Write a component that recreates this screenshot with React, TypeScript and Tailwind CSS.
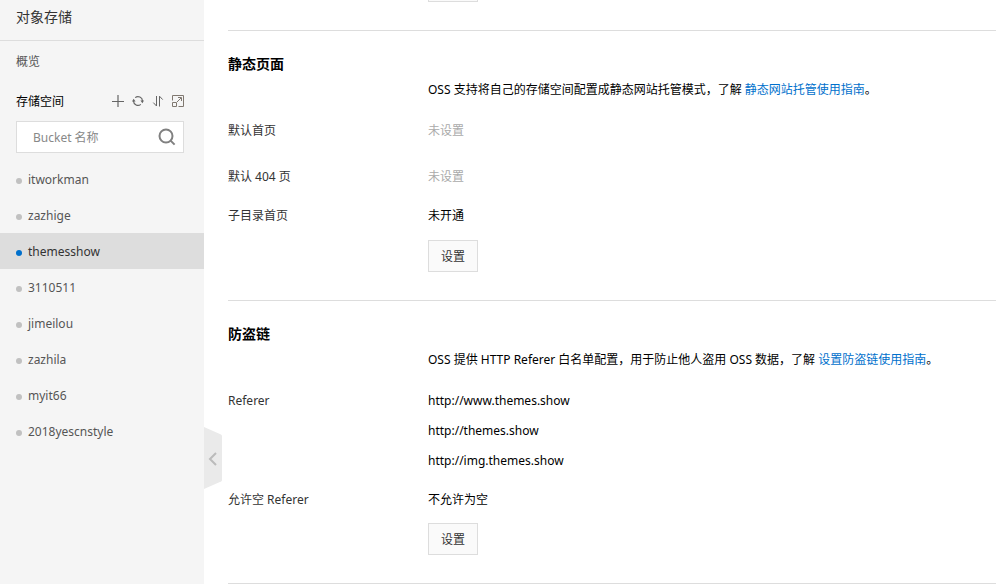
import React, { useState } from 'react';

const buckets = [
  'itworkman',
  'zazhige',
  'themesshow',
  '3110511',
  'jimeilou',
  'zazhila',
  'myit66',
  '2018yescnstyle',
];

const referers = ['http://www.themes.show', 'http://themes.show', 'http://img.themes.show'];

const PlusIcon = () => (
  <svg width="12" height="12" viewBox="0 0 12 12" fill="none" stroke="currentColor">
    <path d="M6 0v12M0 6.5h12" strokeWidth="1.2" />
  </svg>
);

const RefreshIcon = () => (
  <svg width="12" height="12" viewBox="0 0 12 12" fill="none" stroke="currentColor" strokeWidth="1.2">
    <path d="M3.2 2.6A4.5 4.5 0 0 1 10.5 6M8.8 9.4A4.5 4.5 0 0 1 1.5 6" />
    <path d="M8.4 5.6H12L10.4 8.2zM0 6.4h3.6L1.6 3.8z" fill="currentColor" stroke="none" />
  </svg>
);

const SortIcon = () => (
  <svg width="12" height="12" viewBox="0 0 12 12" fill="none" stroke="currentColor">
    <path d="M4.5 1v10L1.3 7.6M7.5 11.5V1.2l3.2 3.4" />
  </svg>
);

const ExpandIcon = () => (
  <svg width="12" height="12" viewBox="0 0 12 12" fill="none" stroke="#807870">
    <path d="M0.5 5.5v-5h11v11h-5M0.5 7.5h4v4h-4zM5 7l4-4M6 2.5h3.5V6" />
  </svg>
);

const SearchIcon = () => (
  <svg width="18" height="18" viewBox="0 0 18 18" fill="none" stroke="currentColor" strokeWidth="2">
    <circle cx="8" cy="8" r="6.5" />
    <path d="M12.6 12.6l4 4" />
  </svg>
);

const Section: React.FC<{ title: string; children: React.ReactNode }> = ({ title, children }) => (
  <section className="border-t border-[#ddd] pt-[23px] pb-7">
    <h2 className="text-sm leading-5 font-bold text-black">{title}</h2>
    {children}
  </section>
);

const Row: React.FC<{ label?: string; className?: string; children: React.ReactNode }> = ({
  label,
  className = '',
  children,
}) => (
  <div className={`flex leading-[30px] ${className}`}>
    <div className="w-[200px] shrink-0 text-[#333]">{label}</div>
    <div className="min-w-0 flex-1 text-black">{children}</div>
  </div>
);

const SettingButton = () => (
  <button
    type="button"
    className="block h-8 border border-[#ddd] bg-[#fafafa] px-3 pt-0.5 text-xs text-[#333] hover:bg-[#f0f0f0]"
  >
    设置
  </button>
);

const App: React.FC = () => {
  const [current, setCurrent] = useState('themesshow');
  const [keyword, setKeyword] = useState('');

  return (
    <div className="flex min-h-screen bg-white font-['Noto_Sans','Noto_Sans_CJK_SC',sans-serif] text-xs">
      {/* Sidebar */}
      <aside className="relative w-[204px] shrink-0 bg-[#f5f5f5] text-[#555]">
        <h1 className="h-[41px] border-b border-[#ddd] px-4 text-sm leading-[34px] text-[#333]">对象存储</h1>
        <a href="#overview" className="block h-10 px-4 leading-[42px]">
          概览
        </a>
        <div className="flex h-10 items-center justify-between pr-5 pl-4">
          <span className="pt-0.5 text-black">存储空间</span>
          <div className="flex gap-2 text-[#666]">
            <button type="button" aria-label="新建">
              <PlusIcon />
            </button>
            <button type="button" aria-label="刷新">
              <RefreshIcon />
            </button>
            <button type="button" aria-label="排序">
              <SortIcon />
            </button>
            <button type="button" aria-label="展开">
              <ExpandIcon />
            </button>
          </div>
        </div>
        <div className="mr-5 ml-4 flex h-8 items-center border border-[#ddd] bg-white pr-[7px]">
          <input
            type="text"
            aria-label="Bucket 名称"
            placeholder="Bucket 名称"
            value={keyword}
            onChange={(e) => setKeyword(e.target.value)}
            className="h-full min-w-0 flex-1 pl-4 outline-none placeholder:text-[#888]"
          />
          <button type="button" aria-label="搜索" className="text-[#808080]">
            <SearchIcon />
          </button>
        </div>

        {/* Bucket list */}
        <ul className="mt-2">
          {buckets.map((name) => (
            <li key={name}>
              <button
                type="button"
                onClick={() => setCurrent(name)}
                className={`flex h-9 w-full items-center gap-1.5 px-4 pt-0.5 ${
                  name === current ? 'bg-[#ddd] text-[#333]' : ''
                }`}
              >
                <span
                  className={`mt-0.5 size-1.5 rounded-full ${name === current ? 'bg-[#0070cc]' : 'bg-[#c1c1c1]'}`}
                />
                {name}
              </button>
            </li>
          ))}
        </ul>

        {/* Collapse handle */}
        <button type="button" aria-label="收起" className="absolute top-[427px] left-full">
          <svg width="18" height="62" viewBox="0 0 18 62" fill="none">
            <path d="M0 0l17 7.5q1 .5 1 1.5v44q0 1-1 1.5L0 62z" fill="#eaeaea" />
            <path d="M12 26l-6 6 6 6" stroke="#bbb" strokeWidth="2" />
          </svg>
        </button>
      </aside>

      {/* Settings */}
      <main className="min-w-0 flex-1 pl-6">
        {/* Lower edge of the previous section's button */}
        <div className="pb-7 pl-[200px]">
          <div className="h-0.5 w-[50px] border border-t-0 border-[#ddd] bg-[#fafafa]" />
        </div>

        <Section title="静态页面">
          <Row className="mt-px">
            OSS 支持将自己的存储空间配置成静态网站托管模式，了解{' '}
            <a href="#website" className="text-[#0070cc]">
              静态网站托管使用指南
            </a>
            。
          </Row>
          <Row label="默认首页" className="mt-[11px]">
            <span className="text-[#aaa]">未设置</span>
          </Row>
          <Row label="默认 404 页" className="mt-4">
            <span className="text-[#aaa]">未设置</span>
          </Row>
          <Row label="子目录首页" className="mt-[9px]">
            未开通
          </Row>
          <Row className="mt-[9px]">
            <SettingButton />
          </Row>
        </Section>

        <Section title="防盗链">
          <Row className="mt-px">
            OSS 提供 HTTP Referer 白名单配置，用于防止他人盗用 OSS 数据，了解{' '}
            <a href="#referer" className="text-[#0070cc]">
              设置防盗链使用指南
            </a>
            。
          </Row>
          <Row label="Referer" className="mt-[11px]">
            {referers.map((url) => (
              <div key={url}>{url}</div>
            ))}
          </Row>
          <Row label="允许空 Referer" className="mt-[9px]">
            不允许为空
          </Row>
          <Row className="mt-2">
            <SettingButton />
          </Row>
        </Section>

        <div className="border-t border-[#ddd]" />
      </main>
    </div>
  );
};

export default App;
